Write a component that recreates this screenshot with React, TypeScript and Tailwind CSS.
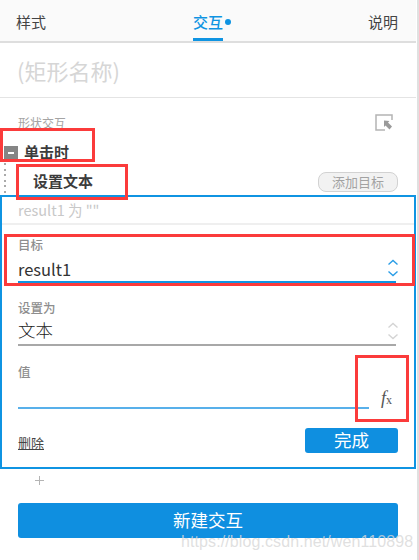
const sans = 'font-["Noto_Sans_CJK_SC","Noto_Sans",sans-serif]';

function Chevrons({ color }: { color: string }) {
  return (
    <svg width="12" height="20" viewBox="0 0 12 20" fill="none" stroke={color} strokeWidth="1.4" className="mr-[-3px]">
      <path d="M1.5 6.5 6 2.5l4.5 4" />
      <path d="M1.5 13.5 6 17.5l4.5-4" />
    </svg>
  );
}

function RedBox({ className }: { className: string }) {
  return <div className={`absolute border-[3px] border-[#fb3b3b] ${className}`} />;
}

export default function App() {
  return (
    <div className={`relative h-[560px] w-[419px] overflow-hidden bg-white ${sans}`}>
      <div className="w-[416px]">
        {/* tabs */}
        <div className="flex h-[43px] items-start justify-between border-b-2 border-[#dedede] bg-[#fafafa] pl-4 pr-[18px] pt-[12px] text-[15px] leading-[20px] text-[#444]">
          <span>样式</span>
          <div className="ml-[10px] flex h-[29px] items-start text-[#0f94e2]">
            <span className="h-[29px] border-b-[3px] border-[#0f94e2] font-medium">交互</span>
            <span className="ml-[2px] mt-[7px] h-[6px] w-[6px] rounded-full bg-[#0f94e2]" />
          </div>
          <span>说明</span>
        </div>

        {/* name */}
        <div className="flex h-[55px] items-center border-b border-[#e4e4e4] pl-[17px] text-[22px] text-[#d6d6d6]">
          (矩形名称)
        </div>

        {/* section heading */}
        <div className="flex h-[44px] items-start justify-between pl-[18px] pr-[23px] pt-[16px]">
          <span className="text-[12px] leading-[18px] text-[#a4a4a4]">形状交互</span>
          <svg width="18" height="17" viewBox="0 0 18 17" fill="none">
            <path d="M17 6V1H1v15h9" stroke="#b4b4b4" strokeWidth="1.5" />
            <path d="M9 6.5l5.5.5-1.5 1.5 4 4-2.5 3-4-4-1.5 1.5z" fill="#9a9a9a" />
          </svg>
        </div>

        {/* trigger */}
        <div className="flex h-[21px] items-center pl-[4px]">
          <span className="flex h-[14px] w-[14px] items-center justify-center bg-[#858585]">
            <span className="h-[2px] w-[6px] bg-white" />
          </span>
          <span className="ml-[6px] text-[15px] font-bold text-[#3c3c3c]">单击时</span>
        </div>

        {/* action */}
        <div className="flex h-[32px] items-start pr-[18px]">
          <div className="ml-[4px] flex w-[2px] flex-col gap-[3.5px]">
            {Array.from({ length: 6 }).map((_, i) => (
              <span key={i} className="h-[2px] w-[2px] bg-[#aaaaaa]" />
            ))}
          </div>
          <span className="ml-[27px] mt-[8px] text-[15px] font-bold leading-[20px] text-[#3c3c3c]">设置文本</span>
          <span className="ml-auto mt-[9px] flex h-[20px] w-[80px] items-center justify-center rounded-[8px] border border-[#d2d2d2] bg-[#f2f2f2] text-[13px] text-[#a2a2a2]">
            添加目标
          </span>
        </div>

        {/* editor */}
        <div className="h-[274px] border-2 border-[#0f94e2] bg-white">
          <div className="flex h-[28px] items-center border-b-2 border-[#efefef] pl-[16px] text-[14.5px] text-[#c8c8c8]">
            result1 为 ""
          </div>

          <div className="pl-[16px] pr-[18px] pt-[11px]">
            <div className="text-[12.5px] font-medium leading-[18px] text-[#8e8e8e]">目标</div>
            <div className="flex h-[29px] items-center justify-between border-b-2 border-[#0f94e2]">
              <span className="mt-[4px] text-[16.5px] text-[#333]">result1</span>
              <Chevrons color="#2a9de6" />
            </div>

            <div className="mt-[16px] text-[12.5px] font-medium leading-[18px] text-[#8e8e8e]">设置为</div>
            <div className="flex h-[29px] items-center justify-between border-b-2 border-[#a8a8a8]">
              <span className="text-[17.5px] font-light text-[#222]">文本</span>
              <Chevrons color="#d4d4d4" />
            </div>

            <div className="mt-[17px] text-[12.5px] font-medium leading-[18px] text-[#8e8e8e]">值</div>
            <div className="flex items-end justify-between">
              <div className="h-[28px] w-[351px] border-b-2 border-[#58b0ea]" />
              <span className="mb-[-2px] mr-[4px] font-['Liberation_Serif',serif] text-[18px] italic leading-[22px] text-[#555]">
                f<span className="text-[12px] font-medium not-italic">x</span>
              </span>
            </div>

            <div className="mt-[19px] flex items-start justify-between">
              <span className="mt-[6px] text-[13px] leading-[18px] text-[#444] underline">删除</span>
              <span className="mr-[-2px] flex h-[25px] w-[93px] items-center justify-center rounded-[3px] bg-[#0f8fe0] text-[17.5px] text-white">
                完成
              </span>
            </div>
          </div>
        </div>

        {/* add */}
        <div className="flex h-[34px] items-start pl-[35px] pt-[7px] text-[#b4b4b4]">
          <svg width="9" height="9" viewBox="0 0 9 9" stroke="currentColor" strokeWidth="1">
            <path d="M4.5 0v9M0 4.5h9" />
          </svg>
        </div>

        <div className="px-[18px]">
          <button className="flex h-[35px] w-full items-center justify-center rounded-[3px] bg-[#0f8fe0] text-[17.5px] text-white">
            新建交互
          </button>
        </div>
      </div>

      {/* annotations drawn over the shot */}
      <RedBox className="left-0 top-[128px] h-[34px] w-[95px]" />
      <RedBox className="left-[16px] top-[164px] h-[36px] w-[112px]" />
      <RedBox className="left-[4px] top-[234px] h-[52px] w-[411px]" />
      <RedBox className="left-[355px] top-[355px] h-[67px] w-[54px]" />

      <div className="absolute inset-y-0 right-0 w-[2px] bg-[#e0e0e0]" />
      <div className="absolute left-[181px] top-[532px] font-['Liberation_Sans',sans-serif] text-[16px] leading-[20px] tracking-[0.1px] text-[#d8d8d8]/80">
        https://blog.csdn.net/wen110898
      </div>
    </div>
  );
}
